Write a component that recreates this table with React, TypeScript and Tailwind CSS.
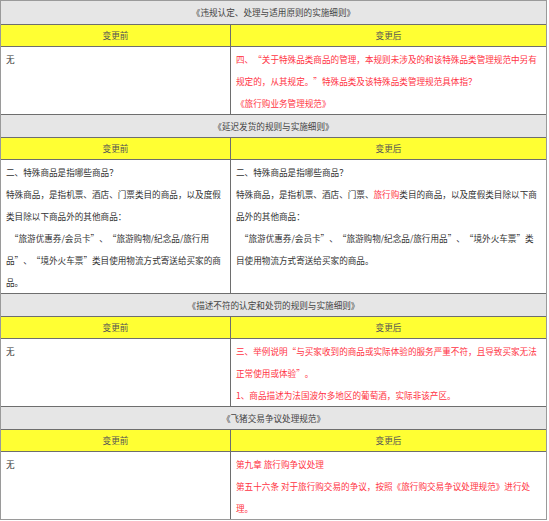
const SECTIONS = [
  {
    title: '《违规认定、处理与适用原则的实施细则》',
    before: [['无']],
    after: [
      [{ t: '四、“关于特殊品类商品的管理，本规则未涉及的和该特殊品类管理规范中另有', red: true }],
      [{ t: '规定的，从其规定。”特殊品类及该特殊品类管理规范具体指？', red: true }],
      [{ t: '《旅行购业务管理规范》', red: true }],
    ],
  },
  {
    title: '《延迟发货的规则与实施细则》',
    before: [
      ['二、特殊商品是指哪些商品？'],
      ['特殊商品，是指机票、酒店、门票类目的商品，以及度假'],
      ['类目除以下商品外的其他商品：'],
      ['\u00a0\u00a0“旅游优惠券/会员卡”、“旅游购物/纪念品/旅行用'],
      ['品”、“境外火车票”类目使用物流方式寄送给买家的商'],
      ['品。'],
    ],
    after: [
      ['二、特殊商品是指哪些商品？'],
      ['特殊商品，是指机票、酒店、门票、', { t: '旅行购', red: true }, '类目的商品，以及度假类目除以下商'],
      ['品外的其他商品：'],
      ['\u00a0\u00a0“旅游优惠券/会员卡”、“旅游购物/纪念品/旅行用品”、“境外火车票”类'],
      ['目使用物流方式寄送给买家的商品。'],
    ],
  },
  {
    title: '《描述不符的认定和处罚的规则与实施细则》',
    before: [['无']],
    after: [
      [{ t: '三、举例说明“与买家收到的商品或实际体验的服务严重不符，且导致买家无法', red: true }],
      [{ t: '正常使用或体验”。', red: true }],
      [{ t: '1、商品描述为法国波尔多地区的葡萄酒，实际非该产区。', red: true }],
    ],
  },
  {
    title: '《飞猪交易争议处理规范》',
    before: [['无']],
    after: [
      [{ t: '第九章 旅行购争议处理', red: true }],
      [{ t: '第五十六条 对于旅行购交易的争议，按照《旅行购交易争议处理规范》进行处', red: true }],
      [{ t: '理。', red: true }],
    ],
  },
];

type Piece = string | { t: string; red?: boolean };

// curly quotes are full width in the original, Noto draws them narrow,
// so give each one a 1em box
function Text({ t }: { t: string }) {
  const parts = t.split(/([“”])/);
  return (
    <>
      {parts.map((p, k) =>
        p === '“' ? (
          <span key={k} className="inline-block w-[1em] text-right">
            {p}
          </span>
        ) : p === '”' ? (
          <span key={k} className="inline-block w-[1em] text-left">
            {p}
          </span>
        ) : (
          <span key={k}>{p}</span>
        )
      )}
    </>
  );
}

function Lines({ lines, rows }: { lines: Piece[][]; rows: number }) {
  return (
    <div className="px-[5px] pt-[1px]" style={{ minHeight: rows * 22 + 1 }}>
      {lines.map((line, i) => (
        <div key={i} className="whitespace-nowrap leading-[22px]">
          {line.map((p, j) =>
            typeof p === 'string' ? (
              <Text key={j} t={p} />
            ) : (
              <span key={j} className={p.red ? 'text-[#ff3344]' : ''}>
                <Text t={p.t} />
              </span>
            )
          )}
        </div>
      ))}
    </div>
  );
}

export default function App() {
  return (
    <div className="w-[549px] h-[521px] bg-white overflow-hidden">
      <div
        className="w-[547px] border border-[#9a9a9a] text-[8.6px] text-[#333]"
        style={{ fontFamily: '"Noto Sans CJK SC", "Noto Sans", sans-serif' }}
      >
        {SECTIONS.map((s, i) => {
          const rows = Math.max(s.before.length, s.after.length, 3);
          return (
            <div key={i}>
              <div
                className={`h-[23px] bg-[#e6e6e6] flex items-center justify-center text-[#444] border-[#6e6e6e] ${
                  i > 0 ? 'border-t' : ''
                }`}
              >
                {s.title}
              </div>
              <div className="grid grid-cols-[230px_1fr] h-[23px] bg-[#ffff33] text-[#555] border-t border-b border-[#6e6e6e]">
                <div className="flex items-center justify-center border-r border-[#6e6e6e]">变更前</div>
                <div className="flex items-center justify-center">变更后</div>
              </div>
              <div className="grid grid-cols-[230px_1fr]">
                <div className="border-r border-[#6e6e6e]">
                  <Lines lines={s.before} rows={rows} />
                </div>
                <div>
                  <Lines lines={s.after} rows={rows} />
                </div>
              </div>
            </div>
          );
        })}
      </div>
    </div>
  );
}
